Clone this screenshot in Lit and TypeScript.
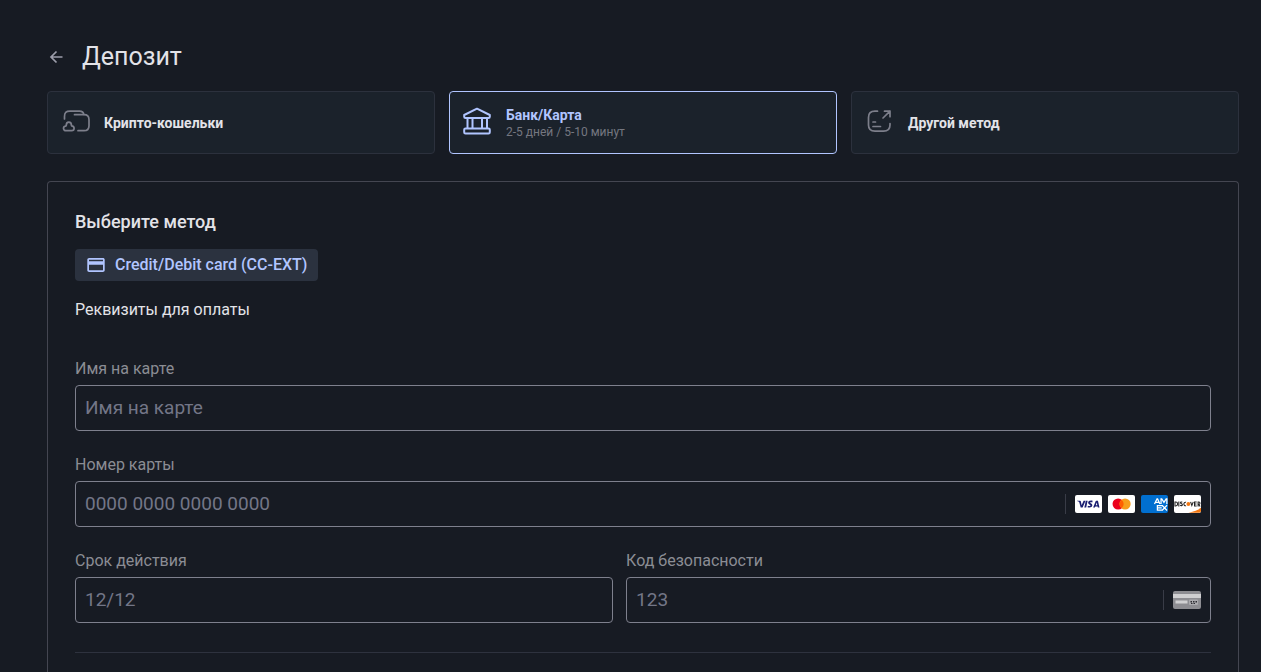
import { LitElement, html, css, svg } from "lit";
import { customElement } from "lit/decorators.js";
import { classMap } from "lit/directives/class-map.js";

const walletIcon = svg`
  <svg viewBox="0 0 28 28" width="28" height="28" fill="none" stroke="currentColor" stroke-width="1.700" stroke-linecap="round" stroke-linejoin="round" aria-hidden="true">
    <path d="M2.500 12V9.500C2.500 5.500 4 4.200 8 4.200h9.500c2.500 0 4 1 4.300 3.300"/>
    <path d="M12.500 7.700H22c3.500 0 5 1.500 5 5v6c0 3.500-1.500 5-5 5h-6"/>
    <path d="M4.200 18.800c0-2 1-3.600 2.600-3.600s2.700 1.600 2.700 3.600c1.600.2 2.600 1.100 2.600 2.500s-1 2.400-2.500 2.400H4c-1.500 0-2.500-1-2.500-2.400 0-1.300 1.200-2.300 2.700-2.500Z"/>
  </svg>`;

const bankIcon = svg`
  <svg viewBox="0 0 30 30" width="30" height="30" fill="none" stroke="currentColor" stroke-width="2" stroke-linejoin="round" aria-hidden="true">
    <path d="M2.200 9 15 2.700 27.800 9v1.800c0 .9-.4 1.300-1.300 1.300h-23c-.9 0-1.300-.4-1.300-1.300Z"/>
    <path d="M5.500 12v10.500M10.500 12v10.500M20 12v10.500M25 12v10.500M5 22.500h20M3.500 27.600h23c.9 0 1.300-.4 1.300-1.300v-2.500c0-.9-.4-1.300-1.300-1.300h-23c-.9 0-1.300.4-1.300 1.300v2.500c0 .9.400 1.300 1.300 1.300Z"/>
  </svg>`;

const otherIcon = svg`
  <svg viewBox="0 0 28 28" width="28" height="28" fill="none" stroke="currentColor" stroke-width="1.700" stroke-linecap="round" stroke-linejoin="round" aria-hidden="true">
    <path d="M11.500 4.200H9C4.500 4.200 2.500 6 2.500 10.500V18C2.500 22.300 4.500 24.200 9 24.200h8.500c4.500 0 6.500-1.900 6.500-6.200v-1.500"/>
    <path d="m17 11 7-6.800M18.500 4.200H24v5.500M7 15h2.500M7 19.500h7.500"/>
  </svg>`;

interface Method {
  title: string;
  note?: string;
  icon: unknown;
  active: boolean;
}

const methods: Method[] = [
  { title: "Крипто-кошельки", icon: walletIcon, active: false },
  { title: "Банк/Карта", note: "2-5 дней / 5-10 минут", icon: bankIcon, active: true },
  { title: "Другой метод", icon: otherIcon, active: false },
];

@customElement("card-brands")
class CardBrands extends LitElement {
  static styles = css`
    :host { display: flex; gap: 6px; }
    .brand { display: block; width: 27px; height: 18px; border-radius: 2px; }
    .white { background: #fff; }
    .blue { background: #016fd0; }
  `;

  render() {
    return html`
      <svg class="brand white" viewBox="0 0 28 18" role="img" aria-label="Visa">
        <g fill="#1a1f71">
          <path d="m11.200 5.500-1.500 7.200h1.900l1.500-7.200Z"/>
          <path d="M2 5.500h3.200c.5 0 .8.200.9.800l.8 3.900 2-4.700h2l-3 7.200H5.900L4.400 7.200C4.200 6.500 3.400 6 2 5.800Z"/>
          <path d="M18.300 5.700c-2.300-.8-4.600 0-4.700 2 0 1.900 2.500 2 2.400 2.900-.1.800-1.600.6-2.600.1l-.4 1.600c2.300.9 4.800.3 5-1.900.1-2-2.500-2.100-2.300-2.900.1-.5 1.300-.5 2.200-.1Z"/>
          <path fill-rule="evenodd" d="M21.800 5.500h2l1.600 7.200h-1.700l-.2-1.100h-2.400l-.4 1.100h-1.900l2.700-6.700c.1-.3.200-.5.300-.5Zm.8 2-1 2.700h1.500Z"/>
        </g>
      </svg>
      <svg class="brand white" viewBox="0 0 28 18" role="img" aria-label="Mastercard">
        <circle cx="10.500" cy="9" r="5.800" fill="#eb001b"/>
        <circle cx="17.700" cy="9" r="5.800" fill="#f79e1b"/>
        <path d="M14.100 4.500a5.800 5.800 0 0 1 0 9 5.800 5.800 0 0 1 0-9Z" fill="#ff5f00"/>
      </svg>
      <svg class="brand blue" viewBox="0 0 28 18" role="img" aria-label="American Express">
        <g fill="none" stroke="#fff" stroke-width="1.300">
          <path d="m14 9 2.600-5.200h.6L19.600 9M15.200 7.200h3.400M20.800 9V3.700h.7l2.300 3.500 2.300-3.500h.7V9"/>
          <path d="M22 10.600h-5v4.800h5M17 13h4.500M21.800 10.300l5.200 5.400M27 10.300l-5.200 5.400"/>
        </g>
      </svg>
      <svg class="brand white" viewBox="0 0 28 18" role="img" aria-label="Discover">
        <path d="M28 13v3.500c0 1-.5 1.500-1.500 1.500H15c6-1.100 10-2.800 13-5Z" fill="#f27712"/>
        <g fill="none" stroke="#222" stroke-width="1.100">
          <path d="M1 7v4h.8c2.600 0 2.600-4 0-4ZM5 6.500v5M8.600 7.200c-1-.7-2-.2-1.800.6.200 1 1.800.7 1.900 1.700.1 1.400-1.500 1.500-2.300.7M12.500 7.300c-3-1-3 4.400 0 3.400"/>
          <path d="m17.200 6.800 1.300 3.700 1.500-3.700M23.500 7h-2.200v4h2.200M21.500 9h1.800M25 11.500V7h.9c1.400 0 1.400 2.200 0 2.200H25M25.700 9.200l1.400 2.300"/>
        </g>
        <circle cx="14.900" cy="9" r="2" fill="#f27712"/>
      </svg>
    `;
  }
}

@customElement("app-root")
class AppRoot extends LitElement {
  static styles = css`
    :host {
      display: flex;
      flex-direction: column;
      box-sizing: border-box;
      min-height: 100vh;
      padding: 40px 22px 0 47px;
      background: #171b23;
      color: #e3e3e8;
      font-family: Roboto, sans-serif;
      font-size: 16px;
      line-height: 20px;
    }
    * { box-sizing: border-box; }
    svg { display: block; flex: none; }
    button, input { font: inherit; color: inherit; margin: 0; }
    button { cursor: pointer; }

    .head { display: flex; align-items: center; gap: 17px; height: 34px; }
    .back { display: flex; padding: 0; border: 0; background: none; color: #9c9daa; }
    .title { margin: 0; font-size: 25px; line-height: 34px; font-weight: 400; }

    .methods { display: grid; grid-template-columns: repeat(3, 1fr); gap: 14px; margin-top: 17px; }
    .method {
      display: flex;
      align-items: center;
      gap: 14px;
      height: 63px;
      padding: 0 14px;
      border: 1px solid #2c313d;
      border-radius: 4px;
      background: #1b222b;
      text-align: left;
    }
    .method svg { margin-bottom: 4px; color: #7d7f8b; }
    .method.active { padding: 0 12px; border-color: #b1c5ff; }
    .method.active svg, .method.active .name { color: #b1c5ff; }
    .text { display: flex; flex-direction: column; }
    .name { font-size: 14px; line-height: 18px; font-weight: 700; }
    .note { font-size: 12px; line-height: 16px; color: #757780; }

    .panel {
      flex: 1;
      margin-top: 27px;
      padding: 27px 27px 0;
      border: 1px solid #444651;
      border-bottom: 0;
      border-radius: 4px 4px 0 0;
    }
    .heading { margin: 0; font-size: 18px; line-height: 26px; font-weight: 500; }
    .chip {
      display: flex;
      align-items: center;
      gap: 9px;
      height: 32px;
      margin-top: 14px;
      padding: 0 11px;
      border: 0;
      border-radius: 4px;
      background: #2b323f;
      color: #b1c5ff;
      font-weight: 500;
    }
    .details { margin: 19px 0 39px; }

    .form { display: flex; flex-direction: column; gap: 24px; padding-bottom: 29px; border-bottom: 1px solid #2e323e; }
    .row { display: grid; grid-template-columns: 23fr 25fr; gap: 13px; }
    .field { display: flex; flex-direction: column; gap: 6px; min-width: 0; }
    .label { color: #8b8d94; }
    .box {
      display: flex;
      align-items: center;
      height: 46px;
      padding: 0 9px;
      border: 1px solid #7e808d;
      border-radius: 4px;
    }
    .box:focus-within { border-color: #b1c5ff; }
    .input { flex: 1; min-width: 0; height: 100%; padding: 0 0 2px; border: 0; outline: 0; background: none; font-size: 19px; }
    .input::placeholder { color: #737687; opacity: 1; }
    .suffix { display: flex; align-items: center; height: 20px; padding-left: 9px; border-left: 1px solid #393c47; }
  `;

  render() {
    return html`
      <header class="head">
        <button class="back" type="button" aria-label="Назад">
          <svg viewBox="0 0 18 18" width="18" height="18" fill="none" stroke="currentColor" stroke-width="1.700" aria-hidden="true">
            <path d="M15.500 9H4.500M9.500 3.500 4 9l5.500 5.500"/>
          </svg>
        </button>
        <h1 class="title">Депозит</h1>
      </header>

      <nav class="methods">
        ${methods.map(
          (m) => html`
            <button type="button" class=${classMap({ method: true, active: m.active })} aria-pressed=${m.active}>
              ${m.icon}
              <span class="text">
                <span class="name">${m.title}</span>
                ${m.note ? html`<span class="note">${m.note}</span>` : ""}
              </span>
            </button>
          `
        )}
      </nav>

      <main class="panel">
        <h2 class="heading">Выберите метод</h2>
        <button class="chip" type="button">
          <svg viewBox="0 0 20 20" width="20" height="20" aria-hidden="true">
            <path fill="currentColor" fill-rule="evenodd" d="M3.200 3h13.600c1.100 0 1.900.7 1.900 1.700v10.600c0 1-.8 1.700-1.900 1.700H3.200c-1.100 0-1.900-.7-1.900-1.700V4.700c0-1 .8-1.700 1.900-1.700ZM3 4.700v1.500h14V4.700Zm0 5v5.600h14V9.700Z"/>
          </svg>
          Credit/Debit card (CC-EXT)
        </button>
        <p class="details">Реквизиты для оплаты</p>

        <form class="form">
          <div class="field">
            <label class="label" for="holder">Имя на карте</label>
            <div class="box"><input class="input" id="holder" placeholder="Имя на карте" autocomplete="cc-name" /></div>
          </div>
          <div class="field">
            <label class="label" for="number">Номер карты</label>
            <div class="box">
              <input class="input" id="number" placeholder="0000 0000 0000 0000" inputmode="numeric" />
              <span class="suffix"><card-brands></card-brands></span>
            </div>
          </div>
          <div class="row">
            <div class="field">
              <label class="label" for="expiry">Срок действия</label>
              <div class="box"><input class="input" id="expiry" placeholder="12/12" inputmode="numeric" /></div>
            </div>
            <div class="field">
              <label class="label" for="code">Код безопасности</label>
              <div class="box">
                <input class="input" id="code" placeholder="123" inputmode="numeric" />
                <span class="suffix">
                  <svg viewBox="0 0 28 18" width="28" height="18" aria-hidden="true">
                    <rect width="28" height="18" rx="2" fill="#8d8d92"/>
                    <path d="M0 3h28v4H0Z" fill="#cfcfd1"/>
                    <path d="M2.500 9.500h12v3h-12Z" fill="#d0d0d2"/>
                    <rect x="16" y="8.500" width="9" height="5.500" rx="1" fill="#aaaaae"/>
                    <path d="M17.500 10h1.500v1.500h-1.500ZM20 10h1.500v1.500H20ZM22.500 10H24v1.500h-1.500ZM18 12h1.500v1H18ZM20.500 12H22v1h-1.500Z" fill="#2d2d33"/>
                  </svg>
                </span>
              </div>
            </div>
          </div>
        </form>
      </main>
    `;
  }
}
